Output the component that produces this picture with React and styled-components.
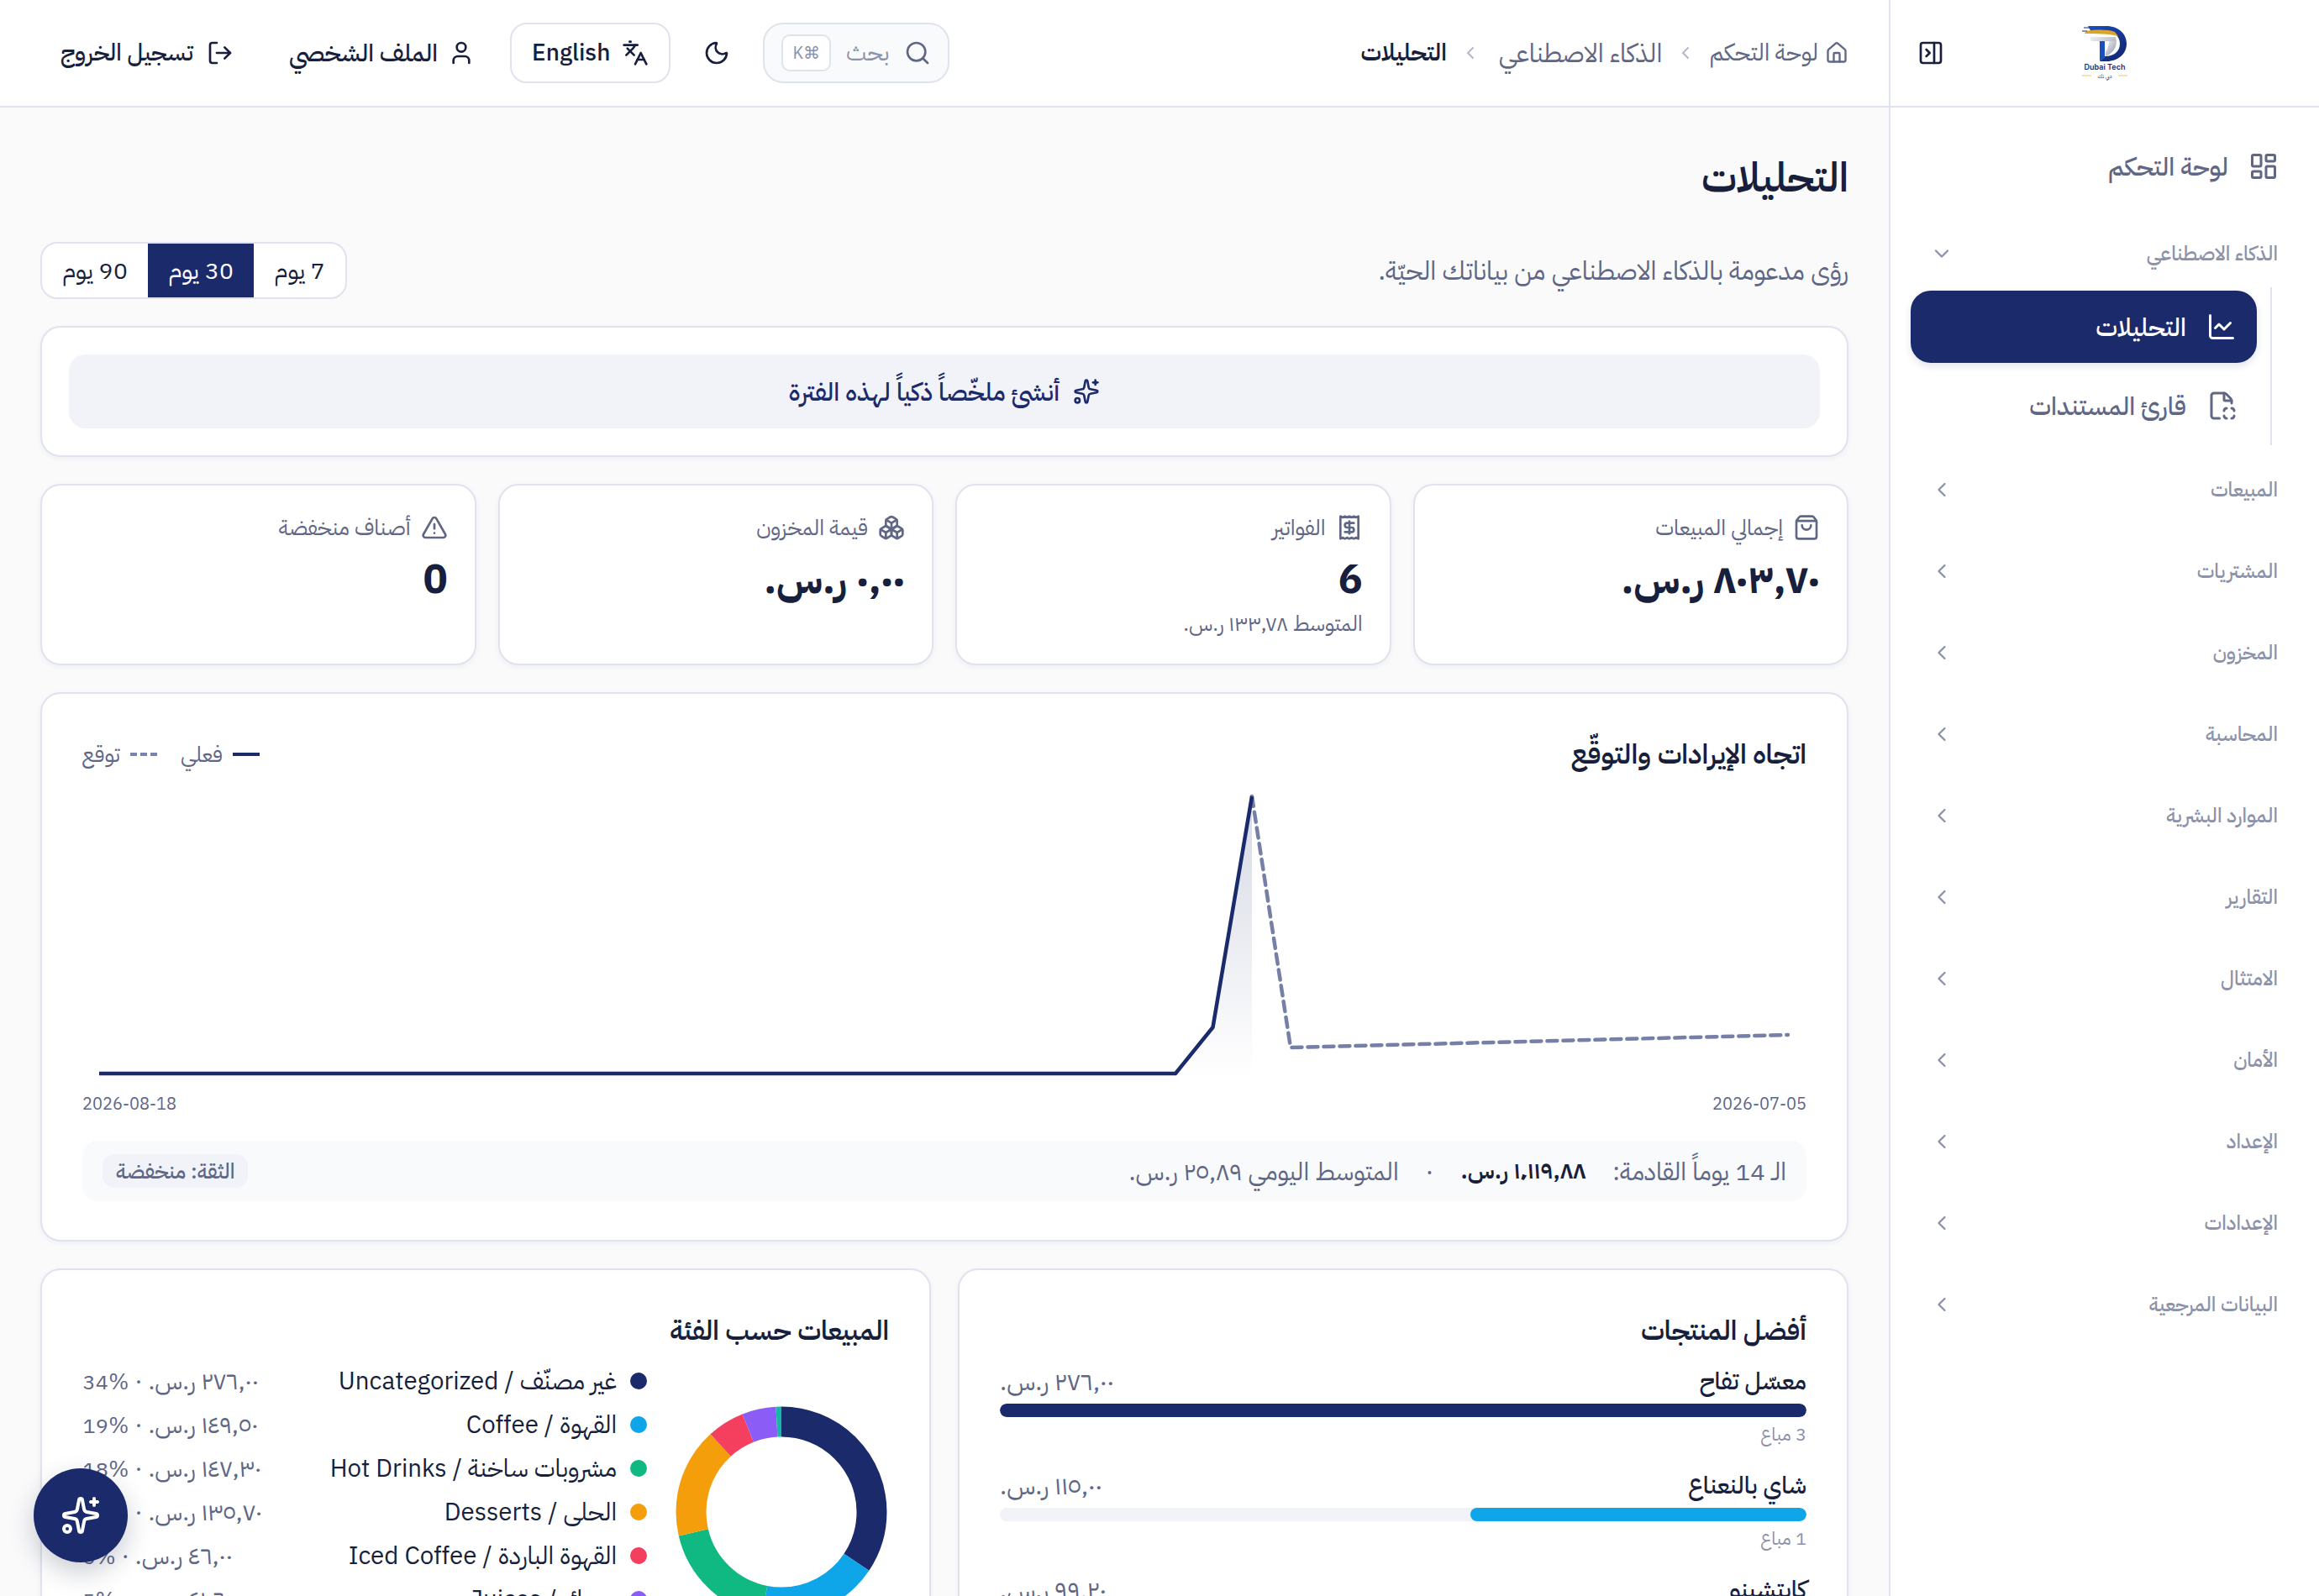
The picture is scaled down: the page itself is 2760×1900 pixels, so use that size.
import React from "react";
import styled, { createGlobalStyle } from "styled-components";
import {
  House, ChevronLeft, ChevronDown, Search, Moon, Languages, User, LogOut,
  PanelRightClose, LayoutDashboard, ChartLine, FileScan, ShoppingBag, Receipt,
  Boxes, TriangleAlert, Sparkles,
} from "lucide-react";

const NAVY = "#1b2a6b";
const INK = "#171f3d";
const MUTED = "#5f6785";
const FAINT = "#8c92a9";
const LINE = "#dfe3ee";
const FONT = `"IBM Plex Sans Arabic", "Noto Sans Arabic", "Noto Sans", sans-serif`;

const Global = createGlobalStyle`
  html, body { margin: 0; padding: 0; height: 100%; overflow: hidden; background: #fff; }
  body { font-family: ${FONT}; color: ${INK}; }
  * { box-sizing: border-box; }
  svg { flex: none; }
`;

const Shell = styled.div`
  display: flex;
  width: 2760px;
  height: 1900px;
  overflow: hidden;
`;

/* ---------- sidebar ---------- */
const Side = styled.aside`
  width: 512px;
  flex: none;
  background: #fff;
  border-left: 2px solid ${LINE};
  display: flex;
  flex-direction: column;
`;
const SideHead = styled.div`
  height: 128px;
  flex: none;
  border-bottom: 2px solid ${LINE};
  padding: 0 32px;
  display: grid;
  grid-template-columns: 1fr auto 1fr;
  align-items: center;
  color: ${INK};
`;
const ToggleSlot = styled.div`
  grid-column: 3;
  justify-self: end;
  display: flex;
`;
const LogoSlot = styled.div`
  grid-column: 2;
  display: flex;
`;
const Nav = styled.nav`
  padding: 27px 24px 0;
  display: flex;
  flex-direction: column;
`;
const TopLink = styled.div`
  height: 86px;
  display: flex;
  align-items: center;
  gap: 24px;
  padding: 0 24px;
  font-size: 30px;
  font-weight: 500;
  color: ${MUTED};
`;
const Group = styled.div`
  height: 80px;
  margin-top: ${(p) => p.$mt}px;
  display: flex;
  align-items: center;
  justify-content: space-between;
  padding: 0 25px 0 23px;
  font-size: 24px;
  font-weight: 500;
  color: ${FAINT};
`;
const SubList = styled.div`
  margin: 0 32px 4px 0;
  padding: 4px 16px 4px 0;
  border-right: 2px solid ${LINE};
  display: flex;
  flex-direction: column;
  gap: 8px;
`;
const SubLink = styled.div`
  height: 86px;
  border-radius: 24px;
  display: flex;
  align-items: center;
  gap: 24px;
  padding: 0 24px;
  font-size: 30px;
  font-weight: 500;
  color: ${(p) => (p.$active ? "#fff" : MUTED)};
  background: ${(p) => (p.$active ? NAVY : "transparent")};
  box-shadow: ${(p) => (p.$active ? "0 4px 10px rgba(27,42,107,.12)" : "none")};
`;

/* ---------- top bar ---------- */
const Main = styled.div`
  flex: 1;
  min-width: 0;
  display: flex;
  flex-direction: column;
  background: #fafafb;
`;
const TopBar = styled.header`
  height: 128px;
  flex: none;
  background: #fff;
  border-bottom: 2px solid ${LINE};
  padding: 0 48px;
  display: flex;
  align-items: center;
  justify-content: space-between;
`;
const Crumbs = styled.div`
  display: flex;
  align-items: center;
  gap: 16px;
  font-size: 28px;
  color: ${MUTED};
`;
const CrumbHome = styled.span`
  display: flex;
  align-items: center;
  gap: 8px;
`;
const CrumbMid = styled.span`
  font-size: 31px;
  padding-left: 6px;
`;
const CrumbNow = styled.span`
  color: ${INK};
  font-weight: 600;
`;
const Sep = styled.span`
  display: flex;
  color: #b4b9cb;
`;
const Actions = styled.div`
  display: flex;
  align-items: center;
  gap: 18px;
`;
const SearchBox = styled.div`
  width: 222px;
  height: 72px;
  background: #f9fafc;
  border: 2px solid ${LINE};
  border-radius: 24px;
  display: flex;
  align-items: center;
  gap: 18px;
  padding: 0 20px;
  color: ${MUTED};
  font-size: 28px;
`;
const SearchText = styled.span`
  flex: 1;
  color: ${FAINT};
`;
const Kbd = styled.kbd`
  width: 62px;
  height: 44px;
  border: 2px solid ${LINE};
  border-radius: 10px;
  background: #fff;
  display: flex;
  align-items: center;
  justify-content: center;
  font-family: ${FONT};
  font-size: 20px;
  color: ${FAINT};
`;
const IconBtn = styled.button`
  width: 64px;
  height: 72px;
  margin: 0 5px;
  border: 0;
  background: none;
  padding: 0;
  color: ${INK};
  display: flex;
  align-items: center;
  justify-content: center;
`;
const LangBtn = styled.button`
  height: 72px;
  padding: 0 24px;
  background: #fff;
  border: 2px solid ${LINE};
  border-radius: 20px;
  color: ${INK};
  font: 500 28px ${FONT};
  display: flex;
  align-items: center;
  gap: 14px;
`;
const TextBtn = styled.button`
  height: 72px;
  padding: 0 24px;
  background: none;
  border: 0;
  color: ${INK};
  font: 500 ${(p) => p.$size || 28}px ${FONT};
  display: flex;
  align-items: center;
  gap: ${(p) => p.$gap || 16}px;
`;

/* ---------- content ---------- */
const Content = styled.main`
  padding: 48px;
  display: flex;
  flex-direction: column;
  gap: 32px;
`;
const PageHead = styled.div`
  display: flex;
  flex-direction: column;
  gap: 42px;
`;
const Title = styled.h1`
  margin: 2px 0 0;
  font-size: 48px;
  line-height: 68px;
  font-weight: 600;
  color: ${INK};
`;
const SubRow = styled.div`
  display: flex;
  align-items: center;
  justify-content: space-between;
`;
const Lead = styled.p`
  margin: 0;
  font-size: 31px;
  color: ${MUTED};
`;
const Range = styled.div`
  display: flex;
  height: 68px;
  background: #fff;
  border: 2px solid ${LINE};
  border-radius: 20px;
  overflow: hidden;
`;
const RangeBtn = styled.span`
  padding: 0 24px;
  display: flex;
  align-items: center;
  font-size: 29px;
  color: ${(p) => (p.$on ? "#fff" : INK)};
  background: ${(p) => (p.$on ? NAVY : "transparent")};
`;
const Card = styled.section`
  background: #fff;
  border: 2px solid ${LINE};
  border-radius: 24px;
  box-shadow: 0 2px 6px rgba(27, 42, 107, 0.05);
`;
const SummaryCard = styled(Card)`
  padding: 32px;
`;
const SummaryBtn = styled.div`
  height: 88px;
  border-radius: 20px;
  background: #f2f3f8;
  color: ${NAVY};
  font-size: 30px;
  font-weight: 500;
  display: flex;
  align-items: center;
  justify-content: center;
  gap: 16px;
`;
const Stats = styled.div`
  display: grid;
  grid-template-columns: repeat(4, 1fr);
  gap: 26px;
`;
const StatCard = styled(Card)`
  height: 216px;
  padding: 32px;
`;
const StatLabel = styled.div`
  display: flex;
  align-items: center;
  gap: 12px;
  height: 40px;
  margin-top: -2px;
  font-size: 26px;
  color: ${MUTED};
`;
const StatValue = styled.div`
  margin-top: 10px;
  font-size: 48px;
  line-height: 64px;
  font-weight: 700;
  color: ${INK};
`;
const StatSub = styled.div`
  margin-top: 4px;
  font-size: 25px;
  line-height: 34px;
  color: ${MUTED};
`;
const ChartCard = styled(Card)`
  height: 654px;
  padding: 48px;
`;
const CardHead = styled.div`
  display: flex;
  align-items: center;
  justify-content: space-between;
  height: 48px;
`;
const CardTitle = styled.h2`
  margin: 0;
  font-size: ${(p) => p.$size || 32}px;
  line-height: 48px;
  font-weight: 600;
  color: ${INK};
`;
const Legend = styled.div`
  display: flex;
  align-items: center;
  gap: 28px;
  font-size: 26px;
  color: ${MUTED};
`;
const LegendItem = styled.span`
  display: flex;
  align-items: center;
  gap: 12px;
`;
const LegendDash = styled.i`
  display: block;
  width: 32px;
  height: 0;
  border-top: 4px ${(p) => (p.$dashed ? "dashed" : "solid")} ${(p) => p.$c};
`;
const ChartBox = styled.div`
  margin-top: 16px;
  height: 350px;
  display: flex;
  justify-content: center;
`;
const Dates = styled.div`
  display: flex;
  justify-content: space-between;
  margin-top: 12px;
  font-size: 20px;
  line-height: 28px;
  color: ${MUTED};
`;
const Forecast = styled.div`
  margin-top: 30px;
  height: 72px;
  background: #f9fafc;
  border-radius: 18px;
  padding: 0 24px;
  display: flex;
  align-items: center;
  justify-content: space-between;
  font-size: 30px;
  color: ${MUTED};
`;
const ForecastText = styled.div`
  display: flex;
  align-items: center;
  gap: 32px;
`;
const Strong = styled.b`
  font-size: 28px;
  font-weight: 600;
  color: ${INK};
`;
const Chip = styled.span`
  height: 40px;
  padding: 0 16px;
  border-radius: 14px;
  background: #f2f3f8;
  display: flex;
  align-items: center;
  font-size: 25px;
  font-weight: 500;
  color: ${MUTED};
`;
const Lower = styled.div`
  display: grid;
  grid-template-columns: 1fr 1fr;
  gap: 32px;
`;
const PanelCard = styled(Card)`
  padding: 48px;
  height: 700px;
`;
const Product = styled.div`
  height: 124px;
  padding-top: 8px;
`;
const ProductHead = styled.div`
  display: flex;
  justify-content: space-between;
  align-items: center;
  height: 40px;
`;
const ProductName = styled.span`
  font-size: 29px;
  font-weight: 500;
  color: ${INK};
`;
const ProductValue = styled.span`
  font-size: 30px;
  color: ${MUTED};
`;
const Track = styled.div`
  margin-top: 7px;
  height: 16px;
  border-radius: 8px;
  background: #f2f3f8;
  overflow: hidden;
`;
const Fill = styled.div`
  height: 100%;
  border-radius: 8px;
  background: ${(p) => p.$c};
`;
const ProductSub = styled.div`
  margin-top: 6px;
  font-size: 22px;
  line-height: 30px;
  color: ${FAINT};
`;
const Products = styled.div`
  margin-top: 8px;
`;
const CatBody = styled.div`
  margin-top: 10px;
  padding-right: 2px;
  display: flex;
  align-items: center;
  gap: 34px;
`;
const Donut = styled.svg`
  flex: none;
  width: 252px;
  height: 252px;
`;
const CatList = styled.div`
  flex: 1;
  display: flex;
  flex-direction: column;
`;
const CatRow = styled.div`
  height: 52px;
  display: flex;
  align-items: center;
  justify-content: space-between;
`;
const CatName = styled.span`
  display: flex;
  align-items: center;
  gap: 16px;
  font-size: 29.5px;
  color: ${INK};
`;
const Dot = styled.i`
  display: block;
  width: 20px;
  height: 20px;
  border-radius: 50%;
  background: ${(p) => p.$c};
`;
const CatValue = styled.span`
  font-size: 29px;
  color: ${MUTED};
`;
const Pct = styled.bdi`
  direction: ltr;
  unicode-bidi: isolate;
  font-size: 26px;
`;
const Fab = styled.button`
  position: fixed;
  left: 40px;
  top: 1748px;
  width: 112px;
  height: 112px;
  border: 0;
  border-radius: 50%;
  background: ${NAVY};
  color: #fff;
  display: flex;
  align-items: center;
  justify-content: center;
  box-shadow: 0 12px 30px rgba(23, 31, 61, 0.22);
`;

function Logo() {
  return (
    <svg width="60" height="66" viewBox="0 0 60 66" aria-label="Dubai Tech">
      <defs>
        <linearGradient id="dBlue" x1="0" y1="0" x2="1" y2="1">
          <stop offset="0" stopColor="#1a4fc0" />
          <stop offset="1" stopColor="#14226b" />
        </linearGradient>
        <linearGradient id="silver" x1="0" y1="0" x2="1" y2="1">
          <stop offset="0" stopColor="#f0f1f4" />
          <stop offset="1" stopColor="#8d92a0" />
        </linearGradient>
      </defs>
      <path d="M10 1h22c14 0 24 9 24 21S46 43 32 43H24l6-6c11 0 18-6 18-15S41 8 32 8H14z" fill="url(#dBlue)" />
      <path d="M8 7c12-2 26-2 34 1l4 5C34 10 20 10 6 10z" fill="#d8a62e" />
      <path d="M12 14h31l1 5H30v19l-6 5V19H14z" fill="url(#silver)" />
      <path d="M24 19h6v19l-6 5z" fill="#1a4fc0" />
      <path d="M35 19h9c0 8-5 15-13 18v-5c2-3 4-8 4-13z" fill="url(#silver)" />
      <path d="M5 3h7M3 7h6" stroke="#1b2a6b" strokeWidth="1" />
      <text x="30" y="53" textAnchor="middle" fontFamily="Inter, sans-serif" fontSize="9" fontWeight="600" fill="#1b2a6b">Dubai Tech</text>
      <text x="30" y="63" textAnchor="middle" fontFamily={FONT} fontSize="6.500" fill="#1b2a6b">دبي تك</text>
      <path d="M3 60h11M46 60h11" stroke="#e0b84a" strokeWidth=".8" />
    </svg>
  );
}

const GROUPS = ["المبيعات", "المشتريات", "المخزون", "المحاسبة", "الموارد البشرية", "التقارير", "الامتثال", "الأمان", "الإعداد", "الإعدادات", "البيانات المرجعية"];

const CATS = [
  { name: "غير مصنّف / Uncategorized", v: 276, t: "٢٧٦٫٠٠ ر.س.", p: "34%", c: "#1b2a6b" },
  { name: "القهوة / Coffee", v: 149.5, t: "١٤٩٫٥٠ ر.س.", p: "19%", c: "#0ea5e9" },
  { name: "مشروبات ساخنة / Hot Drinks", v: 147.3, t: "١٤٧٫٣٠ ر.س.", p: "18%", c: "#10b981" },
  { name: "الحلى / Desserts", v: 135.7, t: "١٣٥٫٧٠ ر.س.", p: "17%", c: "#f59e0b" },
  { name: "القهوة الباردة / Iced Coffee", v: 46, t: "٤٦٫٠٠ ر.س.", p: "6%", c: "#f43f5e" },
  { name: "عصائر / Juices", v: 41.6, t: "٤١٫٦٠ ر.س.", p: "5%", c: "#8b5cf6" },
  { name: "أخرى / Other", v: 7.6, t: "٧٫٦٠ ر.س.", p: "1%", c: "#14b8a6" },
];

const PRODUCTS = [
  { name: "معسّل تفاح", v: "٢٧٦٫٠٠ ر.س.", sub: "3 مباع", w: 100, c: NAVY },
  { name: "شاي بالنعناع", v: "١١٥٫٠٠ ر.س.", sub: "1 مباع", w: 41.7, c: "#0ea5e9" },
  { name: "كابتشينو", v: "٩٩٫٢٠ ر.س.", sub: "4 مباع", w: 36, c: "#10b981" },
];

function DonutChart() {
  const total = CATS.reduce((s, c) => s + c.v, 0);
  const R = 107.5;
  const C = 2 * Math.PI * R;
  let off = 0;
  return (
    <Donut viewBox="0 0 252 252">
      <g transform="rotate(-90 126 126)">
        {CATS.map((c) => {
          const len = (c.v / total) * C;
          const el = (
            <circle key={c.name} cx="126" cy="126" r={R} fill="none" stroke={c.c} strokeWidth="36"
              strokeDasharray={`${len} ${C - len}`} strokeDashoffset={-off} />
          );
          off += len;
          return el;
        })}
      </g>
    </Donut>
  );
}

function TrendChart() {
  return (
    <svg width="2052" height="350" viewBox="0 0 2052 350" style={{ direction: "ltr" }}>
      <defs>
        <linearGradient id="area" x1="0" y1="0" x2="0" y2="1">
          <stop offset="0" stopColor={NAVY} stopOpacity=".18" />
          <stop offset="1" stopColor={NAVY} stopOpacity="0" />
        </linearGradient>
      </defs>
      <path d="M19 340H1301L1345.500 285 1392 10V344H19Z" fill="url(#area)" />
      <polyline points="20,340 1301,340 1345.500,285 1392,10" fill="none" stroke={NAVY} strokeWidth="4.500" strokeLinejoin="round" />
      <polyline points="1392,10 1438,309 2030,294" fill="none" stroke={NAVY} strokeOpacity=".6" strokeWidth="4.500" strokeDasharray="12 7" strokeLinecap="round" strokeLinejoin="round" />
    </svg>
  );
}

export default function App() {
  return (
    <div dir="rtl">
      <Global />
      <Shell>
        <Side>
          <SideHead>
            <LogoSlot><Logo /></LogoSlot>
            <ToggleSlot><PanelRightClose size={32} /></ToggleSlot>
          </SideHead>
          <Nav>
            <TopLink><LayoutDashboard size={36} />لوحة التحكم</TopLink>
            <Group $mt={21}>الذكاء الاصطناعي<ChevronDown size={28} /></Group>
            <SubList>
              <SubLink $active><ChartLine size={36} />التحليلات</SubLink>
              <SubLink><FileScan size={36} />قارئ المستندات</SubLink>
            </SubList>
            {GROUPS.map((g, i) => (
              <Group key={g} $mt={i === 0 ? 9 : 17}>{g}<ChevronLeft size={28} /></Group>
            ))}
          </Nav>
        </Side>
        <Main>
          <TopBar>
            <Crumbs>
              <CrumbHome><House size={28} />لوحة التحكم</CrumbHome>
              <Sep><ChevronLeft size={24} /></Sep>
              <CrumbMid>الذكاء الاصطناعي</CrumbMid>
              <Sep><ChevronLeft size={24} /></Sep>
              <CrumbNow>التحليلات</CrumbNow>
            </Crumbs>
            <Actions>
              <SearchBox>
                <Search size={32} />
                <SearchText>بحث</SearchText>
                <Kbd>⌘K</Kbd>
              </SearchBox>
              <IconBtn><Moon size={32} /></IconBtn>
              <LangBtn><Languages size={32} />English</LangBtn>
              <TextBtn $size={29} $gap={12}><User size={32} />الملف الشخصي</TextBtn>
              <TextBtn><LogOut size={32} />تسجيل الخروج</TextBtn>
            </Actions>
          </TopBar>
          <Content>
            <PageHead>
              <Title>التحليلات</Title>
              <SubRow>
                <Lead>رؤى مدعومة بالذكاء الاصطناعي من بياناتك الحيّة.</Lead>
                <Range>
                  <RangeBtn>7 يوم</RangeBtn>
                  <RangeBtn $on>30 يوم</RangeBtn>
                  <RangeBtn>90 يوم</RangeBtn>
                </Range>
              </SubRow>
            </PageHead>
            <SummaryCard>
              <SummaryBtn><Sparkles size={32} />أنشئ ملخّصاً ذكياً لهذه الفترة</SummaryBtn>
            </SummaryCard>
            <Stats>
              <StatCard>
                <StatLabel><ShoppingBag size={32} />إجمالي المبيعات</StatLabel>
                <StatValue>٨٠٣٫٧٠ ر.س.</StatValue>
              </StatCard>
              <StatCard>
                <StatLabel><Receipt size={32} />الفواتير</StatLabel>
                <StatValue>6</StatValue>
                <StatSub>المتوسط ١٣٣٫٧٨ ر.س.</StatSub>
              </StatCard>
              <StatCard>
                <StatLabel><Boxes size={32} />قيمة المخزون</StatLabel>
                <StatValue>٠٫٠٠ ر.س.</StatValue>
              </StatCard>
              <StatCard>
                <StatLabel><TriangleAlert size={32} />أصناف منخفضة</StatLabel>
                <StatValue>0</StatValue>
              </StatCard>
            </Stats>
            <ChartCard>
              <CardHead>
                <CardTitle $size={33}>اتجاه الإيرادات والتوقّع</CardTitle>
                <Legend>
                  <LegendItem><LegendDash $c={NAVY} />فعلي</LegendItem>
                  <LegendItem><LegendDash $dashed $c="#7a82ae" />توقع</LegendItem>
                </Legend>
              </CardHead>
              <ChartBox><TrendChart /></ChartBox>
              <Dates><span>2026-07-05</span><span>2026-08-18</span></Dates>
              <Forecast>
                <ForecastText>
                  <span>الـ 14 يوماً القادمة:</span>
                  <Strong>١٬١١٩٫٨٨ ر.س.</Strong>
                  <span>·</span>
                  <span>المتوسط اليومي ٢٥٫٨٩ ر.س.</span>
                </ForecastText>
                <Chip>الثقة: منخفضة</Chip>
              </Forecast>
            </ChartCard>
            <Lower>
              <PanelCard>
                <CardTitle>أفضل المنتجات</CardTitle>
                <Products>
                  {PRODUCTS.map((p) => (
                    <Product key={p.name}>
                      <ProductHead>
                        <ProductName>{p.name}</ProductName>
                        <ProductValue>{p.v}</ProductValue>
                      </ProductHead>
                      <Track><Fill $c={p.c} style={{ width: `${p.w}%` }} /></Track>
                      <ProductSub>{p.sub}</ProductSub>
                    </Product>
                  ))}
                </Products>
              </PanelCard>
              <PanelCard>
                <CardTitle>المبيعات حسب الفئة</CardTitle>
                <CatBody>
                  <DonutChart />
                  <CatList>
                    {CATS.map((c) => (
                      <CatRow key={c.name}>
                        <CatName><Dot $c={c.c} />{c.name}</CatName>
                        <CatValue>{c.t} · <Pct>{c.p}</Pct></CatValue>
                      </CatRow>
                    ))}
                  </CatList>
                </CatBody>
              </PanelCard>
            </Lower>
          </Content>
        </Main>
      </Shell>
      <Fab><Sparkles size={48} /></Fab>
    </div>
  );
}
